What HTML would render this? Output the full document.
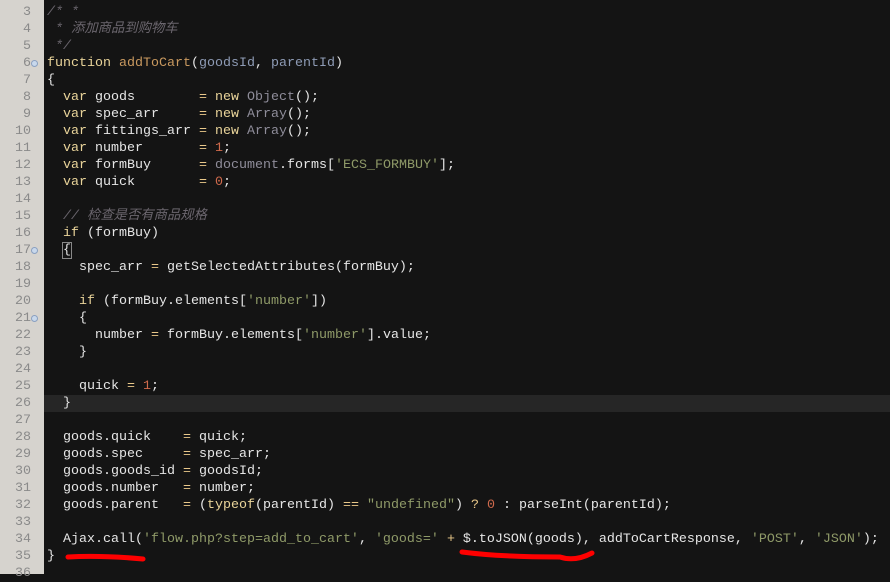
<!DOCTYPE html>
<html><head><meta charset="utf-8"><style>
*{margin:0;padding:0}
body{width:890px;height:574px;overflow:hidden;background:#141414;position:relative;font-family:"Liberation Mono","Noto Sans CJK SC",monospace;font-size:13.33px}
#g{position:absolute;left:0;top:0;width:44px;height:574px;background:#d6d3ce}
.l{position:absolute;left:0;height:17px;line-height:17px;white-space:pre;width:890px}
.n{position:absolute;left:0;width:31px;text-align:right;color:#8a8a8a}
.c{position:absolute;left:47px;color:#e6e6e6}
.k{color:#e9d49a}.f{color:#c9995f}.p{color:#8e9bb5}.o{color:#8f8d9a}.s{color:#8f9a68}.m{color:#cf6a4c}.cm{color:#6b666e;font-style:italic}.e{color:#e9c88a}
.hl{background:#262626}
.fold{position:absolute;left:31px;top:5px;width:7px;height:7px;border-radius:50%;background:#c8d8ec;border:1px solid #8aa0c0;box-sizing:border-box}
</style></head><body>
<div id="g"></div>
<div class="l" style="top:4px"><span class="n">3</span><span class="c"><span class="cm">/* *</span></span></div>
<div class="l" style="top:21px"><span class="n">4</span><span class="c"><span class="cm"> * 添加商品到购物车</span></span></div>
<div class="l" style="top:38px"><span class="n">5</span><span class="c"><span class="cm"> */</span></span></div>
<div class="l" style="top:55px"><span class="n">6</span><span class="fold"></span><span class="c"><span class="k">function</span> <span class="f">addToCart</span>(<span class="p">goodsId</span>, <span class="p">parentId</span>)</span></div>
<div class="l" style="top:72px"><span class="n">7</span><span class="c">{</span></div>
<div class="l" style="top:89px"><span class="n">8</span><span class="c">  <span class="k">var</span> goods        <span class="e">=</span> <span class="k">new</span> <span class="o">Object</span>();</span></div>
<div class="l" style="top:106px"><span class="n">9</span><span class="c">  <span class="k">var</span> spec_arr     <span class="e">=</span> <span class="k">new</span> <span class="o">Array</span>();</span></div>
<div class="l" style="top:123px"><span class="n">10</span><span class="c">  <span class="k">var</span> fittings_arr <span class="e">=</span> <span class="k">new</span> <span class="o">Array</span>();</span></div>
<div class="l" style="top:140px"><span class="n">11</span><span class="c">  <span class="k">var</span> number       <span class="e">=</span> <span class="m">1</span>;</span></div>
<div class="l" style="top:157px"><span class="n">12</span><span class="c">  <span class="k">var</span> formBuy      <span class="e">=</span> <span class="o">document</span>.forms[<span class="s">'ECS_FORMBUY'</span>];</span></div>
<div class="l" style="top:174px"><span class="n">13</span><span class="c">  <span class="k">var</span> quick        <span class="e">=</span> <span class="m">0</span>;</span></div>
<div class="l" style="top:191px"><span class="n">14</span></div>
<div class="l" style="top:208px"><span class="n">15</span><span class="c"><span class="cm">  // 检查是否有商品规格</span></span></div>
<div class="l" style="top:225px"><span class="n">16</span><span class="c">  <span class="k">if</span> (formBuy)</span></div>
<div class="l" style="top:242px"><span class="n">17</span><span class="fold"></span><span class="c">  <span style="outline:1px solid #888">{</span></span></div>
<div class="l" style="top:259px"><span class="n">18</span><span class="c">    spec_arr <span class="e">=</span> getSelectedAttributes(formBuy);</span></div>
<div class="l" style="top:276px"><span class="n">19</span></div>
<div class="l" style="top:293px"><span class="n">20</span><span class="c">    <span class="k">if</span> (formBuy.elements[<span class="s">'number'</span>])</span></div>
<div class="l" style="top:310px"><span class="n">21</span><span class="fold"></span><span class="c">    {</span></div>
<div class="l" style="top:327px"><span class="n">22</span><span class="c">      number <span class="e">=</span> formBuy.elements[<span class="s">'number'</span>].value;</span></div>
<div class="l" style="top:344px"><span class="n">23</span><span class="c">    }</span></div>
<div class="l" style="top:361px"><span class="n">24</span></div>
<div class="l" style="top:378px"><span class="n">25</span><span class="c">    quick <span class="e">=</span> <span class="m">1</span>;</span></div>
<div class="l hl" style="top:395px;left:44px;width:846px"></div>
<div class="l" style="top:395px"><span class="n">26</span><span class="c">  }</span></div>
<div class="l" style="top:412px"><span class="n">27</span></div>
<div class="l" style="top:429px"><span class="n">28</span><span class="c">  goods.quick    <span class="e">=</span> quick;</span></div>
<div class="l" style="top:446px"><span class="n">29</span><span class="c">  goods.spec     <span class="e">=</span> spec_arr;</span></div>
<div class="l" style="top:463px"><span class="n">30</span><span class="c">  goods.goods_id <span class="e">=</span> goodsId;</span></div>
<div class="l" style="top:480px"><span class="n">31</span><span class="c">  goods.number   <span class="e">=</span> number;</span></div>
<div class="l" style="top:497px"><span class="n">32</span><span class="c">  goods.parent   <span class="e">=</span> (<span class="k">typeof</span>(parentId) <span class="e">==</span> <span class="s">"undefined"</span>) <span class="e">?</span> <span class="m">0</span> : parseInt(parentId);</span></div>
<div class="l" style="top:514px"><span class="n">33</span></div>
<div class="l" style="top:531px"><span class="n">34</span><span class="c">  Ajax.call(<span class="s">'flow.php?step=add_to_cart'</span>, <span class="s">'goods='</span> <span class="e">+</span> $.toJSON(goods), addToCartResponse, <span class="s">'POST'</span>, <span class="s">'JSON'</span>);</span></div>
<div class="l" style="top:548px"><span class="n">35</span><span class="c">}</span></div>
<div class="l" style="top:565px"><span class="n">36</span></div>
<svg style="position:absolute;left:0;top:0" width="890" height="574"><path d="M68 557 Q100 555 143 559" stroke="#f00" stroke-width="5" fill="none" stroke-linecap="round"/><path d="M462 552 Q500 557 560 557 Q575 562 592 553" stroke="#f00" stroke-width="5" fill="none" stroke-linecap="round"/></svg>
</body></html>
